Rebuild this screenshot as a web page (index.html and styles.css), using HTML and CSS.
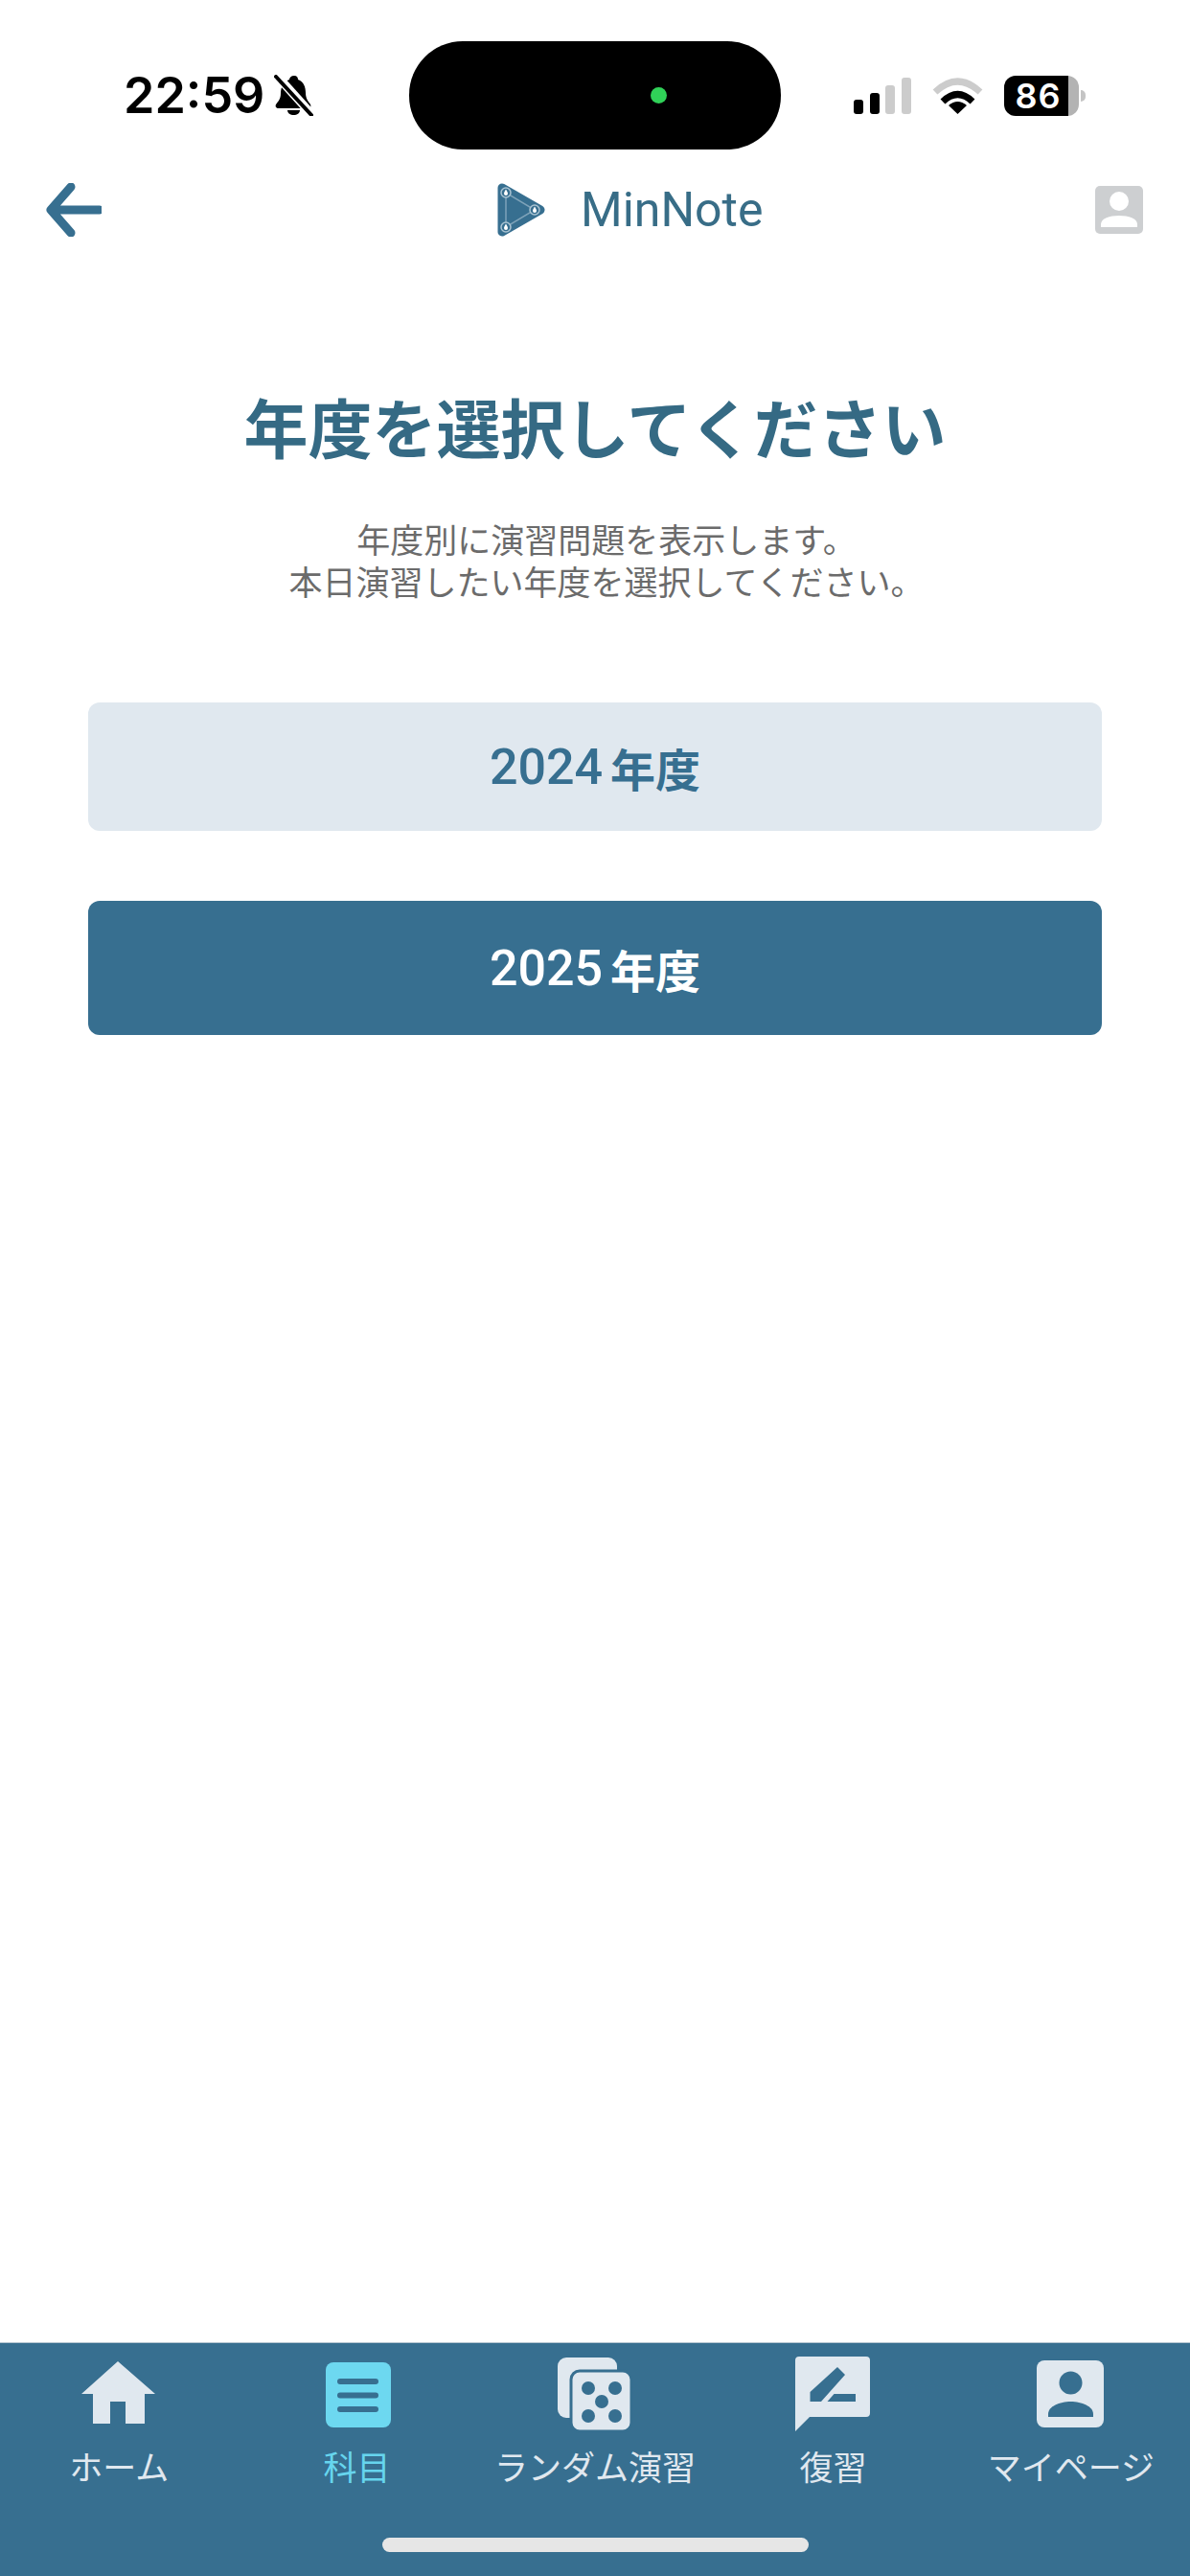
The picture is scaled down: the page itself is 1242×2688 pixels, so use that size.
FILE: index.html
```html
<!DOCTYPE html>
<html lang="ja">
<head>
    <meta charset="UTF-8">
    <meta name="viewport" content="width=device-width, initial-scale=1.0">
    <title>MinNote</title>
    <link rel="stylesheet" href="styles.css">
</head>
<body>
    <div class="page">
        <div class="status-bar">
            <div class="status-left">
                <span class="time">22:59</span>
                <svg class="bell" viewBox="0 0 41 43">
                    <path d="M21 1c3 0 4 2 4 4 6 2 8 8 8 14 0 6 3 9 5 12 1 2 0 4-2 4H5c-3 0-4-2-3-4 2-3 5-5 5-12 0-6 3-12 9-14 0-2 2-4 5-4z"/>
                    <path d="M14 37h13c0 3-3 5-6.500 5S14 40 14 37z"/>
                    <path class="bell-gap" d="M3 1l37 41"/>
                    <path class="bell-slash" d="M2 2l37 40"/>
                </svg>
            </div>
            <div class="island"><span class="island-dot"></span></div>
            <div class="status-right">
                <div class="signal">
                    <span class="bar bar-1"></span>
                    <span class="bar bar-2"></span>
                    <span class="bar bar-3 off"></span>
                    <span class="bar bar-4 off"></span>
                </div>
                <svg class="wifi" viewBox="0 0 53 38">
                    <path class="wifi-off" d="M3 15Q26.500-7 50 15"/>
                    <path class="wifi-on" d="M11 25Q26.500 10 42 25"/>
                    <path d="M26.500 38L17 29Q26.500 21 36 29z"/>
                </svg>
                <div class="battery">
                    <div class="battery-body">
                        <span class="battery-level">86</span>
                        <span class="battery-rest"></span>
                    </div>
                    <span class="battery-nub"></span>
                </div>
            </div>
        </div>

        <header class="nav">
            <svg class="back" viewBox="0 0 58 56">
                <path d="M26 4L5 28l21 24M6 28h50"/>
            </svg>
            <div class="brand">
                <svg class="logo" viewBox="0 0 50 56">
                    <path class="logo-shape" d="M5 5l40 23L5 51z"/>
                    <path class="logo-line" d="M9 10v36l30-18z"/>
                    <circle class="logo-node" cx="9" cy="10" r="5"/>
                    <circle class="logo-node" cx="9" cy="46" r="5"/>
                    <circle class="logo-node" cx="39" cy="28" r="5"/>
                    <path class="logo-dot" d="M9 6.500c1 2 2 3 2 4.500a2 2 0 0 1-4 0c0-1.500 1-2.500 2-4.500z"/>
                    <path class="logo-dot" d="M9 42.500c1 2 2 3 2 4.500a2 2 0 0 1-4 0c0-1.500 1-2.500 2-4.500z"/>
                    <path class="logo-dot" d="M39 24.500c1 2 2 3 2 4.500a2 2 0 0 1-4 0c0-1.500 1-2.500 2-4.500z"/>
                </svg>
                <span class="brand-name">MinNote</span>
            </div>
            <svg class="profile" viewBox="0 0 50 50">
                <rect width="50" height="50" rx="5" fill="#cdcfd1"/>
                <circle cx="25" cy="16" r="10" fill="#fff"/>
                <path d="M6 43v-3c0-6 9-9 19-9s19 3 19 9v3z" fill="#fff"/>
            </svg>
        </header>

        <main class="content">
            <h1>年度を選択してください</h1>
            <p class="lead">年度別に演習問題を表示します。<br>本日演習したい年度を選択してください。</p>
            <div class="year-list">
                <button class="year-btn">2024<span class="year-unit">年度</span></button>
                <button class="year-btn selected">2025<span class="year-unit">年度</span></button>
            </div>
        </main>

        <footer class="tabbar">
            <nav class="tabs">
                <a class="tab">
                    <svg viewBox="0 0 80 80"><path class="ic" d="M39 5l39 34H67v31H47V47H31v23H13V39H1z"/></svg>
                    <span>ホーム</span>
                </a>
                <a class="tab active">
                    <svg viewBox="0 0 80 80">
                        <rect class="ic" x="7" y="6" width="68" height="68" rx="8"/>
                        <path class="ic-line" d="M22 26h37M22 40.500h37M22 55h37"/>
                    </svg>
                    <span>科目</span>
                </a>
                <a class="tab">
                    <svg viewBox="0 0 80 80">
                        <rect class="ic" x="1" y="1" width="62" height="63" rx="9"/>
                        <rect class="ic ic-cut" x="15" y="15" width="63" height="63" rx="9"/>
                        <circle class="ic-dot" cx="33" cy="33" r="7"/>
                        <circle class="ic-dot" cx="61" cy="33" r="7"/>
                        <circle class="ic-dot" cx="47" cy="47" r="7"/>
                        <circle class="ic-dot" cx="33" cy="62" r="7"/>
                        <circle class="ic-dot" cx="61" cy="62" r="7"/>
                    </svg>
                    <span>ランダム演習</span>
                </a>
                <a class="tab">
                    <svg viewBox="0 0 80 80">
                        <path class="ic" d="M5 0h70q4 0 4 4v55q0 4-4 4H16L1 78V4q0-4 4-4z"/>
                        <path class="ic-dot" d="M45 11l8 8-25 28H16.500V37zM41.500 39H64v8H34.500z"/>
                    </svg>
                    <span>復習</span>
                </a>
                <a class="tab">
                    <svg viewBox="0 0 80 80">
                        <rect class="ic" x="4" y="4" width="70" height="70" rx="8"/>
                        <circle class="ic-dot" cx="39.500" cy="27.500" r="12"/>
                        <path class="ic-dot" d="M16 63v-3c0-8 12-13 23.500-13S63 52 63 60v3z"/>
                    </svg>
                    <span>マイページ</span>
                </a>
            </nav>
            <div class="home-bar"></div>
        </footer>
    </div>
</body>
</html>
```

FILE: styles.css
```css
* {
    box-sizing: border-box;
}

body {
    margin: 0;
    background-color: #fff;
    font-family: "Noto Sans CJK JP", "Noto Sans", sans-serif;
}

.page {
    display: flex;
    flex-direction: column;
    height: 2688px;
}

/* status bar */
.status-bar {
    display: flex;
    height: 156px;
    padding-top: 43px;
    flex-shrink: 0;
}

.status-left {
    display: flex;
    align-items: center;
    width: 427px;
    padding-left: 129px;
}

.time {
    width: 157px;
    font-family: Inter, sans-serif;
    font-size: 52px;
    font-weight: 600;
    color: #000;
}

.bell {
    width: 41px;
    height: 43px;
}

.bell-gap {
    stroke: #fff;
    stroke-width: 9;
}

.bell-slash {
    stroke: #000;
    stroke-width: 4;
    stroke-linecap: round;
}

.island {
    display: flex;
    align-items: center;
    justify-content: flex-end;
    width: 388px;
    height: 113px;
    padding-right: 119px;
    background-color: #000;
    border-radius: 56px;
}

.island-dot {
    width: 17px;
    height: 17px;
    background-color: #30d158;
    border-radius: 50%;
}

.status-right {
    display: flex;
    align-items: center;
    gap: 22px;
    height: 113px;
    padding-left: 76px;
}

.signal {
    display: flex;
    align-items: flex-end;
    gap: 6.500px;
    height: 38px;
    width: 60px;
}

.bar {
    width: 10px;
    background-color: #000;
    border-radius: 3px;
}

.bar.off {
    background-color: #cccccc;
}

.bar-1 { height: 15px; }
.bar-2 { height: 22px; }
.bar-3 { height: 30px; }
.bar-4 { height: 38px; }

.wifi {
    width: 53px;
    height: 38px;
}

.wifi-off,
.wifi-on {
    fill: none;
    stroke-width: 7;
}

.wifi-off {
    stroke: #cccccc;
}

.wifi-on {
    stroke: #000;
}

.battery {
    display: flex;
    align-items: center;
}

.battery-body {
    display: flex;
    width: 78px;
    height: 42px;
    overflow: hidden;
    border-radius: 12px;
}

.battery-level {
    flex: 1;
    padding-left: 4px;
    background-color: #000;
    color: #fff;
    font-family: Inter, sans-serif;
    font-size: 36px;
    font-weight: 600;
    letter-spacing: 1px;
    line-height: 42px;
    text-align: center;
}

.battery-rest {
    width: 11px;
    background-color: #b3b3b3;
}

.battery-nub {
    width: 5px;
    height: 12px;
    margin-left: 2px;
    background-color: #c4c4c4;
    border-radius: 0 6px 6px 0;
}

/* top nav */
.nav {
    display: flex;
    align-items: center;
    height: 126px;
    padding-left: 48px;
    flex-shrink: 0;
}

.back {
    width: 58px;
    height: 56px;
    fill: none;
    stroke: #376f90;
    stroke-width: 9;
    stroke-linecap: round;
    stroke-linejoin: round;
}

.brand {
    display: flex;
    align-items: center;
    gap: 37px;
    width: 624px;
    margin-left: 413px;
}

.logo {
    width: 50px;
    height: 56px;
}

.logo-shape {
    fill: #376f90;
    stroke: #376f90;
    stroke-width: 9;
    stroke-linejoin: round;
}

.logo-line {
    fill: none;
    stroke: #7ea3b9;
    stroke-width: 1.500;
}

.logo-node {
    fill: #376f90;
    stroke: #a9c3d2;
    stroke-width: 1.500;
}

.logo-dot {
    fill: #fff;
}

.brand-name {
    font-family: Roboto, sans-serif;
    font-size: 50px;
    color: #386d87;
}

.profile {
    width: 50px;
    height: 50px;
}

/* main */
.content {
    flex: 1;
    padding: 118px 92px 0;
    text-align: center;
}

h1 {
    margin: 0 0 52px;
    font-size: 67px;
    font-weight: 700;
    line-height: 88px;
    color: #356a84;
}

.lead {
    margin: 0 0 105px;
    padding-left: 24px;
    font-size: 35px;
    line-height: 44px;
    color: #6b6b6b;
}

.year-list {
    display: flex;
    flex-direction: column;
    gap: 73px;
}

.year-btn {
    display: flex;
    align-items: center;
    justify-content: center;
    gap: 8px;
    width: 100%;
    height: 134px;
    border: none;
    border-radius: 12px;
    background-color: #e0e8ef;
    color: #376f90;
    font-family: Roboto, sans-serif;
    font-size: 52px;
    font-weight: 500;
}

.year-btn.selected {
    height: 140px;
    background-color: #376f90;
    color: #fff;
}

.year-unit {
    font-family: "Noto Sans CJK JP", sans-serif;
    font-size: 47px;
    font-weight: 700;
}

/* bottom tabs */
.tabbar {
    display: flex;
    flex-direction: column;
    align-items: center;
    height: 244px;
    padding-top: 14px;
    background-color: #376f90;
    border-top: 1px solid #b5c6d2;
    flex-shrink: 0;
}

.tabs {
    display: grid;
    grid-template-columns: repeat(5, 1fr);
    width: 100%;
}

.tab {
    display: flex;
    flex-direction: column;
    align-items: center;
    gap: 14px;
    font-size: 35px;
    line-height: 40px;
    color: #e0e8ef;
    white-space: nowrap;
}

.tab svg {
    width: 80px;
    height: 80px;
}

.ic {
    fill: #e0e8ef;
}

.ic-cut {
    stroke: #376f90;
    stroke-width: 3;
}

.ic-dot {
    fill: #376f90;
}

.ic-line {
    fill: none;
    stroke: #376f90;
    stroke-width: 6;
    stroke-linecap: round;
}

.tab.active {
    color: #66d5ee;
}

.tab.active .ic {
    fill: #6dd8f0;
}

.home-bar {
    width: 445px;
    height: 15px;
    margin-top: 55px;
    background-color: #e6e6e6;
    border-radius: 8px;
}
```
